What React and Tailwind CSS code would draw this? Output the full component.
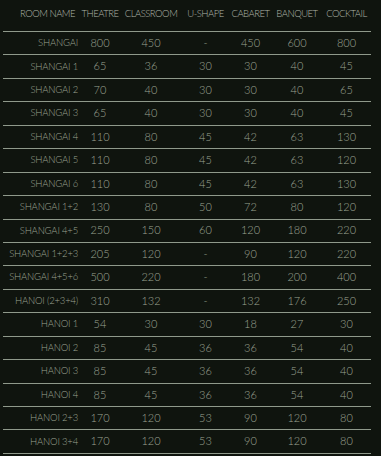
const headers = ['ROOM NAME', 'THEATRE', 'CLASSROOM', 'U-SHAPE', 'CABARET', 'BANQUET', 'COCKTAIL'];

const rows = [
  ['SHANGAI', '800', '450', '-', '450', '600', '800'],
  ['SHANGAI 1', '65', '36', '30', '30', '40', '45'],
  ['SHANGAI 2', '70', '40', '30', '30', '40', '65'],
  ['SHANGAI 3', '65', '40', '30', '30', '40', '45'],
  ['SHANGAI 4', '110', '80', '45', '42', '63', '130'],
  ['SHANGAI 5', '110', '80', '45', '42', '63', '120'],
  ['SHANGAI 6', '110', '80', '45', '42', '63', '130'],
  ['SHANGAI 1+2', '130', '80', '50', '72', '80', '120'],
  ['SHANGAI 4+5', '250', '150', '60', '120', '180', '220'],
  ['SHANGAI 1+2+3', '205', '120', '-', '90', '120', '220'],
  ['SHANGAI 4+5+6', '500', '220', '-', '180', '200', '400'],
  ['HANOI (2+3+4)', '310', '132', '-', '132', '176', '250'],
  ['HANOI 1', '54', '30', '30', '18', '27', '30'],
  ['HANOI 2', '85', '45', '36', '36', '54', '40'],
  ['HANOI 3', '85', '45', '36', '36', '54', '40'],
  ['HANOI 4', '85', '45', '36', '36', '54', '40'],
  ['HANOI 2+3', '170', '120', '53', '90', '120', '80'],
  ['HANOI 3+4', '170', '120', '53', '90', '120', '80'],
];

// column widths, first one holds the right-aligned room name
const cols = ['w-[77px]', 'w-[40px]', 'w-[62px]', 'w-[47px]', 'w-[43px]', 'w-[50px]', 'w-[49px]'];

export default function App() {
  return (
    <div className="w-[381px] h-[456px] overflow-hidden bg-[#0f140e] font-['Lato','Liberation_Sans',sans-serif] font-light">
      <div className="w-[368px] ml-[3px]">
        {/* header */}
        <div className="flex h-[32px] items-center border-b border-[#8f998b] text-[9.5px] tracking-[-0.5px] text-[#b0b6aa] pb-[3px]">
          {headers.map((h, i) => (
            <div key={h} className={`${cols[i]} ${i === 0 ? 'text-right pr-[5px]' : 'text-center'}`}>
              {h}
            </div>
          ))}
        </div>

        {rows.map((r) => (
          <div key={r[0]} className="flex h-[23.45px] items-center border-b border-[#8f998b] text-[#9da393]">
            {r.map((c, i) => (
              <div
                key={i}
                className={`${cols[i]} ${
                  i === 0 ? 'text-right pr-[2px] text-[9.5px] tracking-[-0.2px]' : 'text-center text-[11px]'
                }`}
              >
                {c}
              </div>
            ))}
          </div>
        ))}
      </div>
    </div>
  );
}
